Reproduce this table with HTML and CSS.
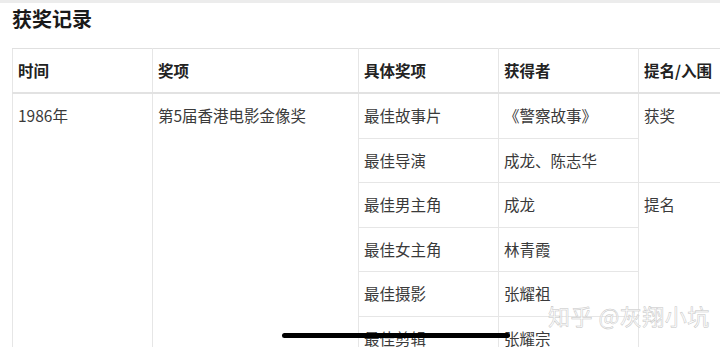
FILE: index.html
```html
<!DOCTYPE html>
<html lang="zh">
<head>
<meta charset="utf-8">
<link rel="stylesheet" href="styles.css">
</head>
<body>
<div class="topbar"></div>
<main class="content">
  <h2 class="title">获奖记录</h2>
  <table class="awards">
    <colgroup>
      <col class="c1"><col class="c2"><col class="c3"><col class="c4"><col class="c5">
    </colgroup>
    <thead>
      <tr><th>时间</th><th>奖项</th><th>具体奖项</th><th>获得者</th><th>提名/入围</th></tr>
    </thead>
    <tbody>
      <tr><td rowspan="6">1986年</td><td rowspan="6">第5届香港电影金像奖</td><td>最佳故事片</td><td>《警察故事》</td><td rowspan="2">获奖</td></tr>
      <tr><td>最佳导演</td><td>成龙、陈志华</td></tr>
      <tr><td>最佳男主角</td><td>成龙</td><td rowspan="4">提名</td></tr>
      <tr><td>最佳女主角</td><td>林青霞</td></tr>
      <tr><td>最佳摄影</td><td>张耀祖</td></tr>
      <tr><td>最佳剪辑</td><td>张耀宗</td></tr>
    </tbody>
  </table>
</main>
<div class="watermark">知乎 @灰翔小坑</div>
<div class="home-indicator"></div>
</body>
</html>
```
FILE: styles.css
```css
html, body {
  margin: 0;
  padding: 0;
  width: 720px;
  height: 347px;
  overflow: hidden;
  background: #fff;
  font-family: "Noto Sans CJK SC", "Noto Sans", sans-serif;
  color: #333;
  position: relative;
}
.topbar {
  height: 3px;
  background: #ececec;
}
.content {
  padding: 0 0 0 12px;
}
.title {
  margin: 0;
  padding-top: 3px;
  font-size: 20px;
  line-height: 26px;
  font-weight: 700;
  color: #1a1a1a;
  height: 42px;
}
.awards {
  border-collapse: collapse;
  table-layout: fixed;
  width: 760px;
  font-size: 15.5px;
}
.c1 { width: 140px; }
.c2 { width: 206px; }
.c3 { width: 140px; }
.c4 { width: 140px; }
.c5 { width: 134px; }
.awards th,
.awards td {
  border: 1px solid #e6e6e6;
  padding: 10px 5px 11.5px;
  line-height: 22px;
  height: 22px;
  text-align: left;
  vertical-align: top;
  white-space: nowrap;
}
.awards td {
  font-weight: 400;
  color: #3a3a3a;
}
.awards th {
  font-weight: 700;
  color: #222;
  border-bottom: 2px solid #e2e2e2;
  padding-top: 10px;
  padding-bottom: 11px;
}
.awards thead tr th {
  border-top: 1px solid #e0e0e0;
}
.watermark {
  position: absolute;
  left: 548px;
  top: 300px;
  font-size: 22px;
  line-height: 30px;
  color: rgba(255,255,255,0.9);
  -webkit-text-stroke: 0.5px #c4c4c4;
  letter-spacing: 0.5px;
}
.home-indicator {
  position: absolute;
  left: 282px;
  top: 333px;
  width: 228px;
  height: 5px;
  border-radius: 3px;
  background: #000;
}
```
